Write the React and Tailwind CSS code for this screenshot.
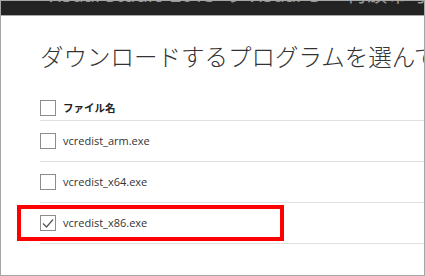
const files = [
  { name: "vcredist_arm.exe", checked: false },
  { name: "vcredist_x64.exe", checked: false },
  { name: "vcredist_x86.exe", checked: true, highlight: true },
];

const jp = { fontFamily: '"Noto Sans CJK JP", "Noto Sans", sans-serif' };

const Checkbox = ({ checked }) => (
  <div className="w-[16px] h-[16px] border border-[#8c8c8c] bg-white flex items-center justify-center shrink-0">
    {checked && (
      <svg width="14" height="14" viewBox="0 0 14 14" fill="none">
        <path d="M2 7.5 L5.5 11 L12 3.5" stroke="#555" strokeWidth="1.2" />
      </svg>
    )}
  </div>
);

export default function App() {
  return (
    <div className="w-[425px] h-[276px] border border-[#a6a6a6] bg-white overflow-hidden" style={jp}>
      {/* title bar, only the bottom of the text shows */}
      <div className="h-[15px] bg-[#232323] border-b border-[#a9a9a9] overflow-hidden pl-[44px]">
        <div className="-mt-[17px] text-[20px] leading-[22px] text-[#9a9a9a] whitespace-nowrap" style={{ fontFamily: '"Open Sans", "Noto Sans CJK JP", sans-serif' }}>
          Visual Studio 2015 の Visual C++ 再頒布可能パッケージ
        </div>
      </div>

      <div className="pl-[39px]">
        <h1 className="mt-[24px] text-[23.5px] leading-[33px] font-light text-[#333] whitespace-nowrap">
          ダウンロードするプログラムを選んで
        </h1>

        <div className="mt-[23px] h-[25px] flex items-center gap-[7px] border-b border-[#e1e1e1]">
          <Checkbox />
          <span className="text-[10.5px] font-bold text-[#222]">ファイル名</span>
        </div>

        {files.map((f) => (
          <div key={f.name} className="relative h-[41px] flex items-center gap-[7px] border-b border-[#e1e1e1]">
            <Checkbox checked={f.checked} />
            <span className="text-[11px] text-[#333]" style={{ fontFamily: '"Open Sans", sans-serif' }}>
              {f.name}
            </span>
            {f.highlight && (
              <div className="absolute left-[-23px] top-[2px] w-[267px] h-[36px] border-[4px] border-[#ff0000]" />
            )}
          </div>
        ))}
      </div>
    </div>
  );
}
